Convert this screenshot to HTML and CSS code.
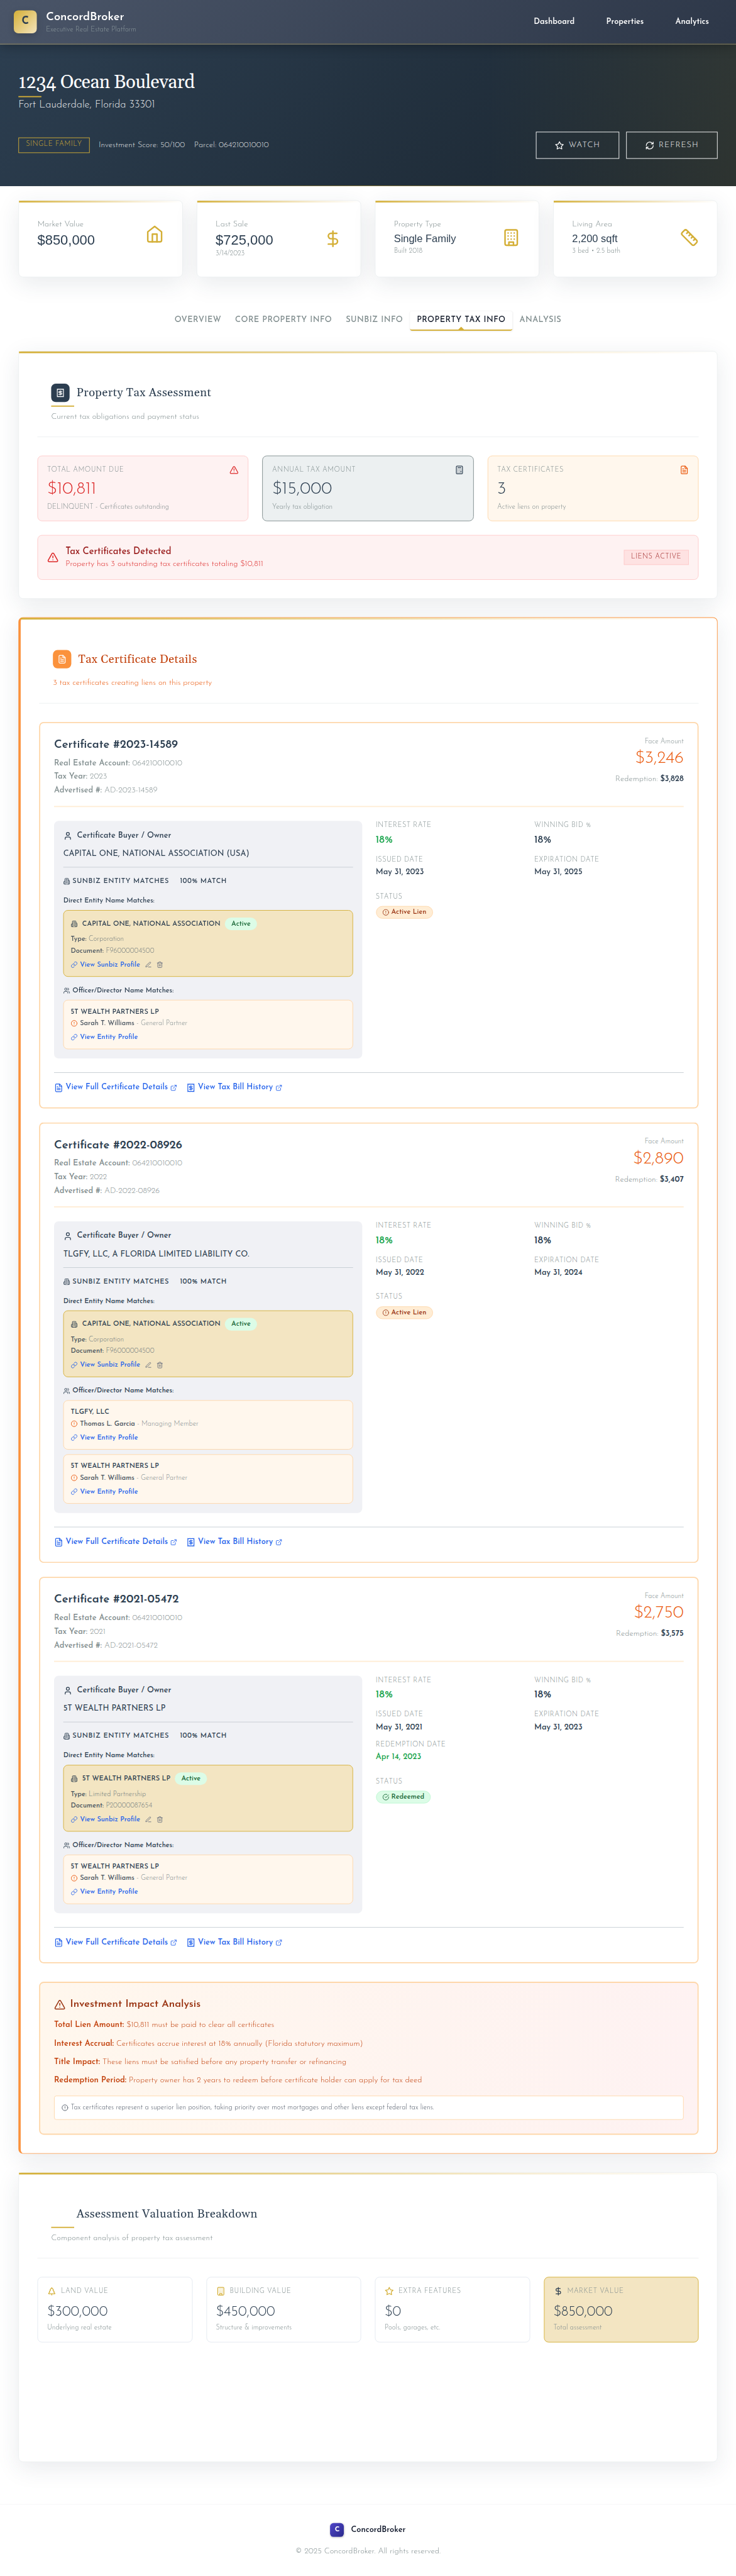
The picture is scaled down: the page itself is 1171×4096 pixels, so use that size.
FILE: index.html
```html
<!DOCTYPE html>
<html lang="en">
<head>
<meta charset="utf-8">
<title>1234 Ocean Boulevard - ConcordBroker</title>
<link rel="stylesheet" href="styles.css">
</head>
<body>
<svg class="sprite" aria-hidden="true">
  <symbol id="home" viewBox="0 0 24 24"><path d="m3 9 9-7 9 7v11a2 2 0 0 1-2 2H5a2 2 0 0 1-2-2V9z"/><path d="M9 22V12h6v10"/></symbol>
  <symbol id="dollar" viewBox="0 0 24 24"><path d="M12 2v20"/><path d="M17 5H9.5a3.5 3.5 0 0 0 0 7h5a3.5 3.5 0 0 1 0 7H6"/></symbol>
  <symbol id="building" viewBox="0 0 24 24"><rect x="4" y="2" width="16" height="20" rx="2"/><path d="M9 22v-4h6v4M8 6h.01M16 6h.01M12 6h.01M12 10h.01M12 14h.01M16 10h.01M16 14h.01M8 10h.01M8 14h.01"/></symbol>
  <symbol id="ruler" viewBox="0 0 24 24"><path d="M21.3 15.3a2.4 2.4 0 0 1 0 3.4l-2.6 2.6a2.4 2.4 0 0 1-3.4 0L2.7 8.7a2.41 2.41 0 0 1 0-3.4l2.6-2.6a2.41 2.41 0 0 1 3.4 0Z"/><path d="m14.5 12.5 2-2M11.5 9.5l2-2M8.5 6.5l2-2M17.5 15.5l2-2"/></symbol>
  <symbol id="warning" viewBox="0 0 24 24"><path d="m21.73 18-8-14a2 2 0 0 0-3.48 0l-8 14A2 2 0 0 0 4 21h16a2 2 0 0 0 1.73-3Z"/><path d="M12 9v4M12 17h.01"/></symbol>
  <symbol id="calculator" viewBox="0 0 24 24"><rect x="4" y="2" width="16" height="20" rx="2"/><path d="M8 6h8M16 14v4M16 10h.01M12 10h.01M8 10h.01M12 14h.01M8 14h.01M12 18h.01M8 18h.01"/></symbol>
  <symbol id="file" viewBox="0 0 24 24"><path d="M14.5 2H6a2 2 0 0 0-2 2v16a2 2 0 0 0 2 2h12a2 2 0 0 0 2-2V7.5L14.5 2z"/><path d="M14 2v6h6M16 13H8M16 17H8M10 9H8"/></symbol>
  <symbol id="receipt" viewBox="0 0 24 24"><path d="M4 2v20l2-1 2 1 2-1 2 1 2-1 2 1 2-1 2 1V2l-2 1-2-1-2 1-2-1-2 1-2-1-2 1Z"/><path d="M16 8h-6a2 2 0 1 0 0 4h4a2 2 0 1 1 0 4H8M12 17.5v-11"/></symbol>
  <symbol id="user" viewBox="0 0 24 24"><path d="M19 21v-2a4 4 0 0 0-4-4H9a4 4 0 0 0-4 4v2"/><circle cx="12" cy="7" r="4"/></symbol>
  <symbol id="users" viewBox="0 0 24 24"><path d="M16 21v-2a4 4 0 0 0-4-4H6a4 4 0 0 0-4 4v2"/><circle cx="9" cy="7" r="4"/><path d="M22 21v-2a4 4 0 0 0-3-3.87M16 3.13a4 4 0 0 1 0 7.75"/></symbol>
  <symbol id="office" viewBox="0 0 24 24"><path d="M6 22V4a2 2 0 0 1 2-2h8a2 2 0 0 1 2 2v18Z"/><path d="M6 12H4a2 2 0 0 0-2 2v6a2 2 0 0 0 2 2h2M18 9h2a2 2 0 0 1 2 2v9a2 2 0 0 1-2 2h-2M10 6h4M10 10h4M10 14h4M10 18h4"/></symbol>
  <symbol id="link" viewBox="0 0 24 24"><path d="M10 13a5 5 0 0 0 7.54.54l3-3a5 5 0 0 0-7.07-7.07l-1.72 1.71"/><path d="M14 11a5 5 0 0 0-7.54-.54l-3 3a5 5 0 0 0 7.07 7.07l1.71-1.71"/></symbol>
  <symbol id="pen" viewBox="0 0 24 24"><path d="M12 20h9M16.5 3.5a2.12 2.12 0 0 1 3 3L7 19l-4 1 1-4Z"/></symbol>
  <symbol id="trash" viewBox="0 0 24 24"><path d="M3 6h18M19 6v14c0 1-1 2-2 2H7c-1 0-2-1-2-2V6M8 6V4c0-1 1-2 2-2h4c1 0 2 1 2 2v2M10 11v6M14 11v6"/></symbol>
  <symbol id="alert" viewBox="0 0 24 24"><circle cx="12" cy="12" r="10"/><path d="M12 8v4M12 16h.01"/></symbol>
  <symbol id="check" viewBox="0 0 24 24"><path d="M22 11.08V12a10 10 0 1 1-5.93-9.14"/><path d="m9 11 3 3L22 4"/></symbol>
  <symbol id="external" viewBox="0 0 24 24"><path d="M15 3h6v6M10 14 21 3M18 13v6a2 2 0 0 1-2 2H5a2 2 0 0 1-2-2V8a2 2 0 0 1 2-2h6"/></symbol>
  <symbol id="tree" viewBox="0 0 24 24"><path d="m17 14 3 3.3a1 1 0 0 1-.7 1.7H4.7a1 1 0 0 1-.7-1.7L7 14h-.3a1 1 0 0 1-.7-1.7L9 9h-.2A1 1 0 0 1 8 7.3L12 3l4 4.3a1 1 0 0 1-.8 1.7H15l3 3.3a1 1 0 0 1-.7 1.7H17Z"/><path d="M12 22v-3"/></symbol>
  <symbol id="star" viewBox="0 0 24 24"><path d="m12 2 3.09 6.26L22 9.27l-5 4.87 1.18 6.88L12 17.77l-6.18 3.25L7 14.14 2 9.27l6.91-1.01L12 2z"/></symbol>
  <symbol id="refresh" viewBox="0 0 24 24"><path d="M3 12a9 9 0 0 1 9-9 9.75 9.75 0 0 1 6.74 2.74L21 8M21 3v5h-5M21 12a9 9 0 0 1-9 9 9.75 9.75 0 0 1-6.74-2.74L3 16M8 16H3v5"/></symbol>
</svg>

<div class="page">
  <header class="topbar">
    <div class="brand">
      <div class="logo">C</div>
      <div>
        <div class="brand-name">ConcordBroker</div>
        <div class="brand-sub">Executive Real Estate Platform</div>
      </div>
    </div>
    <nav class="nav"><a>Dashboard</a><a>Properties</a><a>Analytics</a></nav>
  </header>

  <section class="hero">
    <h1 class="hero-title">1234 Ocean Boulevard</h1>
    <p class="hero-sub">Fort Lauderdale, Florida 33301</p>
    <div class="hero-row">
      <div class="hero-meta">
        <span class="badge badge-gold">SINGLE FAMILY</span>
        <span>Investment Score: 50/100</span>
        <span>Parcel: 064210010010</span>
      </div>
      <div class="hero-actions">
        <button class="btn"><svg class="i16"><use href="#star"/></svg>WATCH</button>
        <button class="btn"><svg class="i16"><use href="#refresh"/></svg>REFRESH</button>
      </div>
    </div>
  </section>

  <main class="content">
    <div class="summary">
      <div class="card summary-card">
        <div><div class="summary-label">Market Value</div><div class="summary-money">$850,000</div></div>
        <svg class="i32"><use href="#home"/></svg>
      </div>
      <div class="card summary-card">
        <div><div class="summary-label">Last Sale</div><div class="summary-money">$725,000</div><div class="summary-note">3/14/2023</div></div>
        <svg class="i32"><use href="#dollar"/></svg>
      </div>
      <div class="card summary-card">
        <div><div class="summary-label">Property Type</div><div class="summary-text">Single Family</div><div class="summary-note">Built 2018</div></div>
        <svg class="i32"><use href="#building"/></svg>
      </div>
      <div class="card summary-card">
        <div><div class="summary-label">Living Area</div><div class="summary-text">2,200 sqft</div><div class="summary-note">3 bed • 2.5 bath</div></div>
        <svg class="i32"><use href="#ruler"/></svg>
      </div>
    </div>

    <div class="tabs">
      <a class="tab">OVERVIEW</a><a class="tab">CORE PROPERTY INFO</a><a class="tab">SUNBIZ INFO</a><a class="tab tab-active">PROPERTY TAX INFO</a><a class="tab">ANALYSIS</a>
    </div>

    <section class="card section">
      <div class="section-head">
        <h2 class="section-title underlined"><span class="section-icon"><svg class="i16"><use href="#receipt"/></svg></span>Property Tax Assessment</h2>
        <p class="section-sub">Current tax obligations and payment status</p>
      </div>
      <div class="grid-3">
        <div class="stat stat-red">
          <div class="stat-top"><span class="label">TOTAL AMOUNT DUE</span><svg class="i16"><use href="#warning"/></svg></div>
          <div class="stat-value">$10,811</div>
          <div class="stat-note">DELINQUENT - Certificates outstanding</div>
        </div>
        <div class="stat stat-gray">
          <div class="stat-top"><span class="label">ANNUAL TAX AMOUNT</span><svg class="i16"><use href="#calculator"/></svg></div>
          <div class="stat-value">$15,000</div>
          <div class="stat-note">Yearly tax obligation</div>
        </div>
        <div class="stat stat-orange">
          <div class="stat-top"><span class="label">TAX CERTIFICATES</span><svg class="i16"><use href="#file"/></svg></div>
          <div class="stat-value">3</div>
          <div class="stat-note">Active liens on property</div>
        </div>
      </div>
      <div class="notice">
        <svg class="i20"><use href="#warning"/></svg>
        <div class="notice-body">
          <div class="notice-title">Tax Certificates Detected</div>
          <div class="notice-text">Property has 3 outstanding tax certificates totaling $10,811</div>
        </div>
        <span class="badge badge-red">LIENS ACTIVE</span>
      </div>
    </section>

    <section class="card section section-liens">
      <div class="section-head">
        <h2 class="section-title"><span class="section-icon"><svg class="i16"><use href="#file"/></svg></span>Tax Certificate Details</h2>
        <p class="section-sub">3 tax certificates creating liens on this property</p>
      </div>

      <div class="certs">
        <article class="cert">
          <div class="cert-head">
            <div>
              <h3 class="cert-title">Certificate #2023-14589</h3>
              <div class="cert-lines">
                <div><b>Real Estate Account:</b> 064210010010</div>
                <div><b>Tax Year:</b> 2023</div>
                <div><b>Advertised #:</b> AD-2023-14589</div>
              </div>
            </div>
            <div class="cert-amounts">
              <div class="face-label">Face Amount</div>
              <div class="face-value">$3,246</div>
              <div class="redemption">Redemption: <b>$3,828</b></div>
            </div>
          </div>
          <div class="cert-body">
            <div class="buyer">
              <div class="buyer-head"><svg class="i16"><use href="#user"/></svg>Certificate Buyer / Owner</div>
              <div class="buyer-name">CAPITAL ONE, NATIONAL ASSOCIATION (USA)</div>
              <div class="matches-head"><svg class="i12"><use href="#office"/></svg><span>SUNBIZ ENTITY MATCHES</span><span class="match-rate">100% MATCH</span></div>
              <div class="matches-label">Direct Entity Name Matches:</div>
              <div class="entity entity-gold">
                <div class="entity-name"><svg class="i12"><use href="#office"/></svg>CAPITAL ONE, NATIONAL ASSOCIATION<span class="pill">Active</span></div>
                <div class="entity-lines">
                  <div><b>Type:</b> Corporation</div>
                  <div><b>Document:</b> F96000004500</div>
                </div>
                <div class="entity-links"><a class="link"><svg class="i12"><use href="#link"/></svg>View Sunbiz Profile</a><svg class="i12"><use href="#pen"/></svg><svg class="i12"><use href="#trash"/></svg></div>
              </div>
              <div class="matches-label officers"><svg class="i12"><use href="#users"/></svg>Officer/Director Name Matches:</div>
              <div class="officer-list">
                <div class="entity entity-orange">
                  <div class="officer-entity">5T WEALTH PARTNERS LP</div>
                  <div class="officer"><svg class="i12"><use href="#alert"/></svg><span><b>Sarah T. Williams</b> - General Partner</span></div>
                  <div class="entity-links"><a class="link"><svg class="i12"><use href="#link"/></svg>View Entity Profile</a></div>
                </div>
              </div>
            </div>
            <div class="facts">
              <div class="facts-grid">
                <div><div class="label">INTEREST RATE</div><div class="fact-rate green">18%</div></div>
                <div><div class="label">WINNING BID %</div><div class="fact-rate">18%</div></div>
                <div><div class="label">ISSUED DATE</div><div class="fact-date">May 31, 2023</div></div>
                <div><div class="label">EXPIRATION DATE</div><div class="fact-date">May 31, 2025</div></div>
              </div>
              <div class="label status-label">STATUS</div>
              <span class="status status-lien"><svg class="i12"><use href="#alert"/></svg>Active Lien</span>
            </div>
          </div>
          <div class="cert-foot">
            <a class="link"><svg class="i16"><use href="#file"/></svg>View Full Certificate Details<svg class="i12"><use href="#external"/></svg></a>
            <a class="link"><svg class="i16"><use href="#receipt"/></svg>View Tax Bill History<svg class="i12"><use href="#external"/></svg></a>
          </div>
        </article>

        <article class="cert">
          <div class="cert-head">
            <div>
              <h3 class="cert-title">Certificate #2022-08926</h3>
              <div class="cert-lines">
                <div><b>Real Estate Account:</b> 064210010010</div>
                <div><b>Tax Year:</b> 2022</div>
                <div><b>Advertised #:</b> AD-2022-08926</div>
              </div>
            </div>
            <div class="cert-amounts">
              <div class="face-label">Face Amount</div>
              <div class="face-value">$2,890</div>
              <div class="redemption">Redemption: <b>$3,407</b></div>
            </div>
          </div>
          <div class="cert-body">
            <div class="buyer">
              <div class="buyer-head"><svg class="i16"><use href="#user"/></svg>Certificate Buyer / Owner</div>
              <div class="buyer-name">TLGFY, LLC, A FLORIDA LIMITED LIABILITY CO.</div>
              <div class="matches-head"><svg class="i12"><use href="#office"/></svg><span>SUNBIZ ENTITY MATCHES</span><span class="match-rate">100% MATCH</span></div>
              <div class="matches-label">Direct Entity Name Matches:</div>
              <div class="entity entity-gold">
                <div class="entity-name"><svg class="i12"><use href="#office"/></svg>CAPITAL ONE, NATIONAL ASSOCIATION<span class="pill">Active</span></div>
                <div class="entity-lines">
                  <div><b>Type:</b> Corporation</div>
                  <div><b>Document:</b> F96000004500</div>
                </div>
                <div class="entity-links"><a class="link"><svg class="i12"><use href="#link"/></svg>View Sunbiz Profile</a><svg class="i12"><use href="#pen"/></svg><svg class="i12"><use href="#trash"/></svg></div>
              </div>
              <div class="matches-label officers"><svg class="i12"><use href="#users"/></svg>Officer/Director Name Matches:</div>
              <div class="officer-list">
                <div class="entity entity-orange">
                  <div class="officer-entity">TLGFY, LLC</div>
                  <div class="officer"><svg class="i12"><use href="#alert"/></svg><span><b>Thomas L. Garcia</b> - Managing Member</span></div>
                  <div class="entity-links"><a class="link"><svg class="i12"><use href="#link"/></svg>View Entity Profile</a></div>
                </div>
                <div class="entity entity-orange">
                  <div class="officer-entity">5T WEALTH PARTNERS LP</div>
                  <div class="officer"><svg class="i12"><use href="#alert"/></svg><span><b>Sarah T. Williams</b> - General Partner</span></div>
                  <div class="entity-links"><a class="link"><svg class="i12"><use href="#link"/></svg>View Entity Profile</a></div>
                </div>
              </div>
            </div>
            <div class="facts">
              <div class="facts-grid">
                <div><div class="label">INTEREST RATE</div><div class="fact-rate green">18%</div></div>
                <div><div class="label">WINNING BID %</div><div class="fact-rate">18%</div></div>
                <div><div class="label">ISSUED DATE</div><div class="fact-date">May 31, 2022</div></div>
                <div><div class="label">EXPIRATION DATE</div><div class="fact-date">May 31, 2024</div></div>
              </div>
              <div class="label status-label">STATUS</div>
              <span class="status status-lien"><svg class="i12"><use href="#alert"/></svg>Active Lien</span>
            </div>
          </div>
          <div class="cert-foot">
            <a class="link"><svg class="i16"><use href="#file"/></svg>View Full Certificate Details<svg class="i12"><use href="#external"/></svg></a>
            <a class="link"><svg class="i16"><use href="#receipt"/></svg>View Tax Bill History<svg class="i12"><use href="#external"/></svg></a>
          </div>
        </article>

        <article class="cert">
          <div class="cert-head">
            <div>
              <h3 class="cert-title">Certificate #2021-05472</h3>
              <div class="cert-lines">
                <div><b>Real Estate Account:</b> 064210010010</div>
                <div><b>Tax Year:</b> 2021</div>
                <div><b>Advertised #:</b> AD-2021-05472</div>
              </div>
            </div>
            <div class="cert-amounts">
              <div class="face-label">Face Amount</div>
              <div class="face-value">$2,750</div>
              <div class="redemption">Redemption: <b>$3,575</b></div>
            </div>
          </div>
          <div class="cert-body">
            <div class="buyer">
              <div class="buyer-head"><svg class="i16"><use href="#user"/></svg>Certificate Buyer / Owner</div>
              <div class="buyer-name">5T WEALTH PARTNERS LP</div>
              <div class="matches-head"><svg class="i12"><use href="#office"/></svg><span>SUNBIZ ENTITY MATCHES</span><span class="match-rate">100% MATCH</span></div>
              <div class="matches-label">Direct Entity Name Matches:</div>
              <div class="entity entity-gold">
                <div class="entity-name"><svg class="i12"><use href="#office"/></svg>5T WEALTH PARTNERS LP<span class="pill">Active</span></div>
                <div class="entity-lines">
                  <div><b>Type:</b> Limited Partnership</div>
                  <div><b>Document:</b> P20000087654</div>
                </div>
                <div class="entity-links"><a class="link"><svg class="i12"><use href="#link"/></svg>View Sunbiz Profile</a><svg class="i12"><use href="#pen"/></svg><svg class="i12"><use href="#trash"/></svg></div>
              </div>
              <div class="matches-label officers"><svg class="i12"><use href="#users"/></svg>Officer/Director Name Matches:</div>
              <div class="officer-list">
                <div class="entity entity-orange">
                  <div class="officer-entity">5T WEALTH PARTNERS LP</div>
                  <div class="officer"><svg class="i12"><use href="#alert"/></svg><span><b>Sarah T. Williams</b> - General Partner</span></div>
                  <div class="entity-links"><a class="link"><svg class="i12"><use href="#link"/></svg>View Entity Profile</a></div>
                </div>
              </div>
            </div>
            <div class="facts">
              <div class="facts-grid">
                <div><div class="label">INTEREST RATE</div><div class="fact-rate green">18%</div></div>
                <div><div class="label">WINNING BID %</div><div class="fact-rate">18%</div></div>
                <div><div class="label">ISSUED DATE</div><div class="fact-date">May 31, 2021</div></div>
                <div><div class="label">EXPIRATION DATE</div><div class="fact-date">May 31, 2023</div></div>
                <div><div class="label">REDEMPTION DATE</div><div class="fact-date green">Apr 14, 2023</div></div>
              </div>
              <div class="label status-label">STATUS</div>
              <span class="status status-redeemed"><svg class="i12"><use href="#check"/></svg>Redeemed</span>
            </div>
          </div>
          <div class="cert-foot">
            <a class="link"><svg class="i16"><use href="#file"/></svg>View Full Certificate Details<svg class="i12"><use href="#external"/></svg></a>
            <a class="link"><svg class="i16"><use href="#receipt"/></svg>View Tax Bill History<svg class="i12"><use href="#external"/></svg></a>
          </div>
        </article>
      </div>

      <div class="impact">
        <h3 class="impact-title"><svg class="i20"><use href="#warning"/></svg>Investment Impact Analysis</h3>
        <div class="impact-lines">
          <div><b>Total Lien Amount:</b> $10,811 must be paid to clear all certificates</div>
          <div><b>Interest Accrual:</b> Certificates accrue interest at 18% annually (Florida statutory maximum)</div>
          <div><b>Title Impact:</b> These liens must be satisfied before any property transfer or refinancing</div>
          <div><b>Redemption Period:</b> Property owner has 2 years to redeem before certificate holder can apply for tax deed</div>
        </div>
        <div class="impact-note"><svg class="i12"><use href="#alert"/></svg>Tax certificates represent a superior lien position, taking priority over most mortgages and other liens except federal tax liens.</div>
      </div>
    </section>

    <section class="card section section-values">
      <div class="section-head">
        <h2 class="section-title underlined"><span class="section-icon section-icon-empty"></span>Assessment Valuation Breakdown</h2>
        <p class="section-sub">Component analysis of property tax assessment</p>
      </div>
      <div class="grid-4">
        <div class="value"><div class="value-top"><svg class="i16"><use href="#tree"/></svg><span class="label">LAND VALUE</span></div><div class="value-money">$300,000</div><div class="stat-note">Underlying real estate</div></div>
        <div class="value"><div class="value-top"><svg class="i16"><use href="#building"/></svg><span class="label">BUILDING VALUE</span></div><div class="value-money">$450,000</div><div class="stat-note">Structure &amp; improvements</div></div>
        <div class="value"><div class="value-top"><svg class="i16"><use href="#star"/></svg><span class="label">EXTRA FEATURES</span></div><div class="value-money">$0</div><div class="stat-note">Pools, garages, etc.</div></div>
        <div class="value value-gold"><div class="value-top"><svg class="i16"><use href="#dollar"/></svg><span class="label">MARKET VALUE</span></div><div class="value-money">$850,000</div><div class="stat-note">Total assessment</div></div>
      </div>
    </section>
  </main>

  <footer class="footer">
    <div class="footer-brand"><span class="footer-logo">C</span>ConcordBroker</div>
    <div class="footer-copy">© 2025 ConcordBroker. All rights reserved.</div>
  </footer>
</div>
</body>
</html>
```
FILE: styles.css
```css
* { box-sizing: border-box; margin: 0; padding: 0; }

:root {
  --navy: #2c3e50;
  --gold: #d4af37;
  --sand: #f3e5c2;
  --gray: #7f8c8d;
  --blue: #2563eb;
}

body {
  height: 4096px;
  background: #fff;
  color: var(--navy);
  font-family: "Josefin Sans", Lato, "Liberation Sans", sans-serif;
  font-weight: 300;
  overflow: hidden;
}

/* The layout is designed on a 1280px grid and scaled as a whole. */
.page { width: 1280px; height: 4478px; transform: scale(0.91484, 0.91469); transform-origin: 0 0; margin: 0 -109px -382px 0; }

.sprite { display: none; }
svg { fill: none; stroke: currentColor; stroke-width: 2; stroke-linecap: round; stroke-linejoin: round; flex: none; }
.i12 { width: 12px; height: 12px; }
.i16 { width: 16px; height: 16px; }
.i20 { width: 20px; height: 20px; }
.i32 { width: 32px; height: 32px; }

/* Top bar */
.topbar {
  position: relative;
  z-index: 2;
  height: 77px;
  display: flex;
  align-items: center;
  justify-content: space-between;
  padding: 0 24px;
  background: linear-gradient(135deg, #4a5568 0%, #2d3748 100%);
  border-bottom: 1px solid rgba(212, 175, 55, 0.4);
  box-shadow: 0 4px 20px rgba(0, 0, 0, 0.28);
}
.brand { display: flex; align-items: center; gap: 16px; }
.logo {
  width: 40px; height: 40px;
  border-radius: 8px;
  background: linear-gradient(135deg, var(--gold), #f4e4bc);
  box-shadow: 0 4px 12px rgba(0, 0, 0, 0.15);
  color: var(--navy);
  font-size: 18px; font-weight: 700; line-height: 38px; text-align: center;
}
.brand-name { font-size: 20px; line-height: 28px; font-weight: 600; color: #fff; }
.brand-sub { font-size: 12px; line-height: 16px; color: #8d9a9e; }
.nav { display: flex; gap: 56px; padding-right: 24px; }
.nav a { font-size: 14px; line-height: 20px; font-weight: 600; color: #fff; margin-right: -1px; }

/* Hero */
.hero {
  position: relative;
  height: 247px;
  padding: 46.5px 32px 0;
  color: #fff;
  background:
    linear-gradient(90deg, rgba(212, 175, 55, 0) 66%, rgba(212, 175, 55, 0.1) 100%),
    linear-gradient(135deg, #2c3e50 0%, #1a252f 100%);
}
.hero::after {
  content: "";
  position: absolute; left: 0; right: 0; bottom: 0; height: 1px;
  background: linear-gradient(90deg, transparent, var(--gold), transparent);
}
.hero-title {
  position: relative;
  font-family: Gelasio, Georgia, "Liberation Serif", serif;
  font-size: 32px; line-height: 40px; font-weight: 400; letter-spacing: -0.5px;
}
.hero-title::after {
  content: "";
  position: absolute; left: 0; bottom: -5.5px; width: 40px; height: 2px;
  background: var(--gold);
}
.hero-sub { margin-top: 5px; font-size: 18px; line-height: 28px; color: rgba(255, 255, 255, 0.92); }
.hero-row { display: flex; align-items: center; justify-content: space-between; margin-top: 32.5px; }
.hero-meta { display: flex; align-items: center; gap: 16px; font-size: 14px; line-height: 20px; color: rgba(255, 255, 255, 0.88); }
.hero-actions { display: flex; gap: 12px; }
.badge {
  border: 1px solid;
  padding: 3px 12px 5.5px;
  font-size: 12px; line-height: 16px; letter-spacing: 0.5px;
}
.badge-gold { border-color: var(--gold); color: var(--gold); }
.badge-red { border-color: #fecaca; background: #fee2e2; color: #991b1b; }
.btn {
  display: flex; align-items: center; gap: 8px;
  height: 47px; padding: 0 32px;
  border: 1px solid #fff; background: transparent; color: #fff;
  font: 300 14px/20px "Josefin Sans", Lato, sans-serif;
  letter-spacing: 1px;
}

/* Cards */
.content { padding: 24px 32px 0; }
.card {
  position: relative;
  background: #fff;
  border: 1px solid #ecf0f1;
  border-radius: 8px;
  box-shadow: 0 10px 40px rgba(44, 62, 80, 0.1);
}
.card::before {
  content: "";
  position: absolute; left: 0; right: 0; top: 0; height: 3px;
  background: linear-gradient(90deg, var(--gold), rgba(244, 228, 188, 0.6) 75%, transparent);
}
.summary { display: grid; grid-template-columns: repeat(4, 1fr); gap: 24px; }
.summary-card {
  height: 134px;
  display: flex; justify-content: space-between; align-items: flex-start;
  padding: 32px;
}
.summary-card svg { align-self: center; color: var(--gold); }
.summary-card:nth-child(1) { padding-bottom: 48px; }
.summary-card:nth-child(3), .summary-card:nth-child(4) { padding-bottom: 36px; }
.summary-label { font-size: 14px; line-height: 20px; color: var(--gray); }
.summary-money { font: 400 24px/32px "Liberation Sans", Arial, sans-serif; }
.summary-text { font: 400 18px/28px "Liberation Sans", Arial, sans-serif; }
.summary-note { font-size: 12px; line-height: 16px; color: var(--gray); }

/* Tabs */
.tabs { display: flex; justify-content: center; margin: 59px 0 35px; }
.tab {
  height: 34px; padding: 6px 12px;
  border-bottom: 2px solid transparent; border-radius: 4px;
  font-size: 14px; line-height: 20px; font-weight: 500; letter-spacing: 0.5px;
  color: var(--gray);
}
.tab-active {
  position: relative;
  border-bottom-color: var(--gold);
  color: #111827;
  box-shadow: 0 1px 3px rgba(0, 0, 0, 0.08);
}
.tab-active::after {
  content: "";
  position: absolute; left: 50%; bottom: 0; margin-left: -5px;
  border: 5px solid transparent; border-top: 0; border-bottom-color: var(--gold);
}

/* Sections */
.section { padding: 32px; margin-bottom: 32px; }
.section-head { padding: 24px; border-bottom: 1px solid #ecf0f1; margin-bottom: 32px; }
.section-title {
  position: relative;
  display: flex; align-items: center; gap: 12px;
  font-family: Gelasio, Georgia, "Liberation Serif", serif;
  font-size: 20px; line-height: 32px; font-weight: 400; letter-spacing: 0.5px;
}
.underlined::after {
  content: "";
  position: absolute; left: 0; bottom: -8px; width: 40px; height: 2px;
  background: var(--gold);
}
.section-icon {
  width: 32px; height: 32px; border-radius: 8px;
  display: flex; align-items: center; justify-content: center;
  background: var(--navy); color: #fff;
}
.section-icon-empty { background: none; }
.section-sub { margin-top: 16px; font-size: 14px; line-height: 20px; color: var(--gray); }

.label { font-size: 12px; line-height: 16px; letter-spacing: 0.5px; color: var(--gray); }
.grid-3 { display: grid; grid-template-columns: repeat(3, 1fr); gap: 24px; }
.stat { border: 1px solid; border-radius: 8px; padding: 16px; }
.stat-top { display: flex; justify-content: space-between; }
.stat-value { margin-top: 8px; font-size: 30px; line-height: 36px; }
.stat-note { margin-top: 4px; font-size: 12px; line-height: 16px; color: var(--gray); }
.stat-red { background: #fef2f2; border-color: #fecaca; }
.stat-red svg { color: #dc2626; }
.stat-red .stat-value { color: #dc2626; }
.stat-gray { background: #ecf0f1; border-color: var(--gray); }
.stat-orange { background: #fff7ed; border-color: #fed7aa; }
.stat-orange svg { color: #ea580c; }

.notice {
  margin-top: 24px; padding: 16px;
  display: flex; align-items: center; gap: 12px;
  background: #fef2f2; border: 1px solid #fecaca; border-radius: 8px;
}
.notice > svg { color: #dc2626; }
.notice-body { flex: 1; }
.notice-title { font-size: 16px; line-height: 24px; font-weight: 500; color: #991b1b; }
.notice-text { font-size: 14px; line-height: 20px; color: #dc2626; }

/* Certificates */
.section-liens { border-color: #fb923c; border-left-width: 4px; }
.section-liens .section-icon { background: #fb923c; }
.section-liens .section-title { color: #c2410c; }
.section-liens .section-sub { color: #ea580c; }
.certs { display: grid; gap: 24px; }
.cert { border: 2px solid #fed7aa; border-radius: 8px; padding: 24px; background: #fff; }
.cert-head { display: flex; justify-content: space-between; padding-bottom: 16px; border-bottom: 2px solid #ffedd5; }
.cert-title { font-size: 20px; line-height: 28px; font-weight: 600; margin-bottom: 8px; }
.cert-lines { display: grid; gap: 4px; font-size: 14px; line-height: 20px; color: var(--gray); }
.cert-lines b { font-weight: 500; }
.cert-amounts { text-align: right; }
.face-label { font-size: 12px; line-height: 16px; color: var(--gray); }
.face-value { margin: 4px 0 8px; font-size: 30px; line-height: 36px; color: #ea580c; }
.redemption { font-size: 14px; line-height: 20px; color: var(--gray); }
.redemption b { font-weight: 600; color: var(--navy); }
.cert-body { display: grid; grid-template-columns: 1fr 1fr; gap: 24px; align-items: start; margin: 24px 0; }

.buyer { padding: 16px; background: #f0f1f5; border-radius: 8px; }
.buyer-head { display: flex; align-items: center; gap: 8px; font-size: 14px; line-height: 20px; font-weight: 500; }
.buyer-name { margin-top: 12px; padding-bottom: 12px; border-bottom: 1px solid #c6cdd3; font-size: 14px; line-height: 20px; font-weight: 400; }
.matches-head { margin: 16px 0 18px; display: flex; align-items: center; gap: 4px; font-size: 12px; line-height: 16px; font-weight: 500; letter-spacing: 0.6px; }
.match-rate { margin-left: 15px; }
.matches-label { margin-bottom: 8px; display: flex; align-items: center; gap: 4px; font-size: 12px; line-height: 16px; font-weight: 500; }
.officers { margin-top: 16px; }
.entity { border: 1px solid; border-radius: 8px; padding: 12px; font-size: 12px; line-height: 16px; }
.entity b { font-weight: 500; }
.entity-gold { background: var(--sand); border-color: var(--gold); }
.entity-orange { background: #fff7ed; border-color: #fed7aa; }
.entity-name { display: flex; align-items: center; gap: 8px; font-weight: 500; }
.pill { padding: 3px 11px; border-radius: 11px; background: #dcfce7; color: #166534; }
.entity-lines { display: grid; gap: 4px; margin-top: 8px; color: #6f7a7c; }
.entity-lines b { color: #4a5560; }
.entity-links { display: flex; align-items: center; gap: 8px; margin-top: 8px; color: #6b7280; }
.link { display: flex; align-items: center; gap: 4px; color: var(--blue); font-weight: 500; }
.officer-list { display: grid; gap: 8px; }
.officer-entity { font-weight: 500; }
.officer { display: flex; align-items: center; gap: 4px; margin-top: 4px; color: var(--gray); }
.officer svg { color: #ea580c; }
.officer b { color: #4a5560; }

.facts-grid { display: grid; grid-template-columns: 1fr 1fr; gap: 12px 16px; }
.fact-rate { margin-top: 4px; font-size: 18px; line-height: 28px; font-weight: 500; }
.fact-date { margin-top: 4px; font-size: 14px; line-height: 20px; font-weight: 500; }
.green { color: #16a34a; }
.status-label { margin: 24px 0 8px; }
.status {
  display: inline-flex; align-items: center; gap: 4px; height: 22px; padding: 0 10px;
  border: 1px solid; border-radius: 11px;
  font-size: 12px; line-height: 16px; font-weight: 500;
  vertical-align: top;
}
.status-lien { background: #ffedd5; border-color: #fed7aa; color: #9a3412; }
.status-redeemed { background: #dcfce7; border-color: #bbf7d0; color: #166534; }

.cert-foot { display: flex; gap: 16px; padding-top: 16px; border-top: 1px solid #c6cdd3; font-size: 14px; line-height: 20px; }

/* Impact */
.impact {
  margin-top: 32px; padding: 24px;
  border: 2px solid #fed7aa; border-radius: 8px;
  background: linear-gradient(90deg, #fff7ed, #fef2f2);
}
.impact-title { display: flex; align-items: center; gap: 8px; font-size: 18px; line-height: 28px; font-weight: 600; color: #9a3412; }
.impact-lines { display: grid; gap: 12px; margin: 12px 0 16px; font-size: 14px; line-height: 20px; color: #c2410c; }
.impact-lines b { font-weight: 600; }
.impact-note {
  display: flex; align-items: center; gap: 4px; padding: 12px;
  border: 1px solid #fed7aa; border-radius: 4px; background: #fff;
  font-size: 12px; line-height: 16px; color: #4b5563;
}

/* Valuation */
.section-values { min-height: 504px; margin-bottom: 0; }
.grid-4 { display: grid; grid-template-columns: repeat(4, 1fr); gap: 24px; }
.value { border: 1px solid #e2e8f0; border-radius: 8px; padding: 16px; }
.value-top { display: flex; align-items: center; gap: 8px; }
.value-top svg { color: var(--gold); }
.value-money { margin-top: 12px; font-size: 24px; line-height: 32px; }
.value-gold { background: var(--sand); border-color: var(--gold); }
.value-gold svg { color: var(--navy); }

/* Footer */
.footer {
  margin-top: 73px; height: 125px; padding-top: 32px;
  border-top: 1px solid #f4f5f6;
  display: flex; flex-direction: column; align-items: center; gap: 16px;
}
.footer-brand { display: flex; align-items: center; gap: 12px; font-size: 14px; line-height: 24px; font-weight: 600; color: #0f172a; }
.footer-logo {
  width: 24px; height: 24px; border-radius: 6px;
  background: linear-gradient(135deg, #4f46c8, #2b2a8c);
  box-shadow: 0 1px 3px rgba(0, 0, 0, 0.2);
  color: #fff; font-size: 12px; font-weight: 700; line-height: 23px; text-align: center;
}
.footer-copy { font-size: 14px; line-height: 20px; color: var(--gray); }
```
